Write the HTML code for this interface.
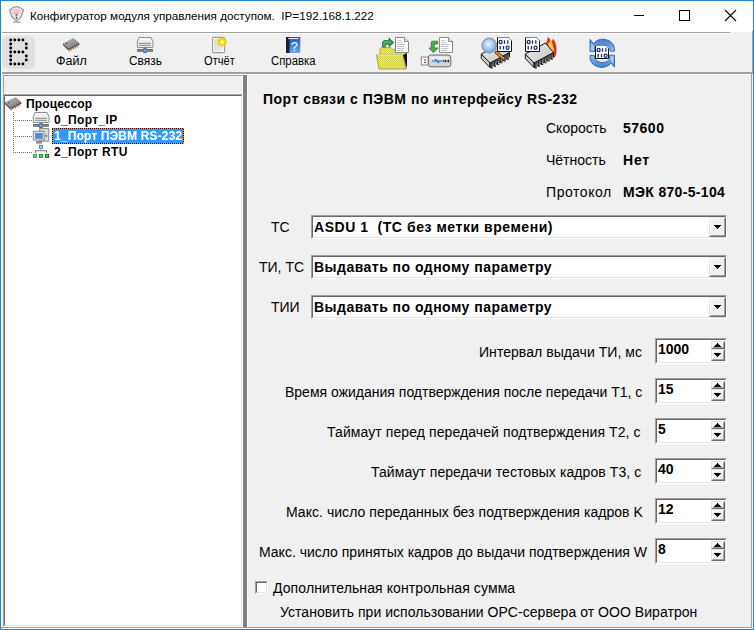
<!DOCTYPE html>
<html><head><meta charset="utf-8">
<style>
*{margin:0;padding:0;box-sizing:border-box}
html,body{width:754px;height:630px;overflow:hidden;background:#f0f0f0}
body{position:relative;font-family:"Liberation Sans",sans-serif;color:#000}
.a{position:absolute}
.t{position:absolute;white-space:pre;line-height:1}
.r{font-size:14px}
.b{font-weight:bold}
.sunk{position:absolute;border-top:1px solid #a0a0a0;border-left:1px solid #a0a0a0;border-right:1px solid #fff;border-bottom:1px solid #fff}
.sunk>.in{position:absolute;left:0;top:0;right:0;bottom:0;border-top:1px solid #696969;border-left:1px solid #696969;border-right:1px solid #e3e3e3;border-bottom:1px solid #e3e3e3;background:#fff}
.btn{position:absolute;background:#f0f0f0;border-top:1px solid #e3e3e3;border-left:1px solid #e3e3e3;border-right:1px solid #696969;border-bottom:1px solid #696969}
.btn>.in{position:absolute;left:0;top:0;right:0;bottom:0;border-top:1px solid #fff;border-left:1px solid #fff;border-right:1px solid #a0a0a0;border-bottom:1px solid #a0a0a0}
.dn{position:absolute;width:0;height:0;border-left:3.5px solid transparent;border-right:3.5px solid transparent;border-top:4px solid #000}
.up{position:absolute;width:0;height:0;border-left:3.5px solid transparent;border-right:3.5px solid transparent;border-bottom:4px solid #000}
</style></head><body>
<!-- window border -->
<div class="a" style="left:0;top:0;width:754px;height:630px;border:1px solid #1883d7"></div>
<!-- title bar -->
<div class="a" style="left:1px;top:1px;width:752px;height:31px;background:#fff"></div>

<div class="t" style="left:30px;top:10px;font-size:11.7px">Конфигуратор модуля управления доступом.  IP=192.168.1.222</div>
<div class="a" style="left:634px;top:15px;width:10px;height:1px;background:#000"></div>
<div class="a" style="left:679px;top:10px;width:11px;height:11px;border:1px solid #000"></div>
<svg class="a" style="left:724px;top:9px" width="13" height="13" viewBox="0 0 13 13"><path d="M1 1L12 12M12 1L1 12" stroke="#000" stroke-width="1.1" fill="none"/></svg>

<!-- toolbar frame -->
<div class="a" style="left:2px;top:32px;width:728px;height:1px;background:#a0a0a0"></div>
<div class="a" style="left:2px;top:33px;width:728px;height:1px;background:#fff"></div>
<div class="a" style="left:752px;top:31px;width:1px;height:43px;background:#a0a0a0"></div>
<div class="a" style="left:1px;top:72px;width:752px;height:2px;background:#a0a0a0"></div>
<div class="a" style="left:1px;top:74px;width:751px;height:1px;background:#fff"></div>
<div class="a" style="left:1px;top:32px;width:1px;height:597px;background:#fff"></div>
<div class="a" style="left:751px;top:74px;width:1px;height:554px;background:#a0a0a0"></div>
<div class="a" style="left:752px;top:74px;width:1px;height:555px;background:#fff"></div>
<div class="a" style="left:1px;top:627px;width:751px;height:1px;background:#a0a0a0"></div>
<div class="a" style="left:1px;top:628px;width:752px;height:1px;background:#fff"></div>

<!-- B button -->
<div class="a" style="left:2px;top:36px;width:33px;height:33px;background:#e1e1e1;border-radius:6px"></div>


<!-- toolbar labels -->
<div class="t" style="left:56px;top:55px;font-size:12.5px;transform:scaleX(1);transform-origin:0 0">Файл</div>
<div class="t" style="left:129px;top:55px;font-size:12.5px;transform:scaleX(.95);transform-origin:0 0">Связь</div>
<div class="t" style="left:204px;top:55px;font-size:12.5px;transform:scaleX(.89);transform-origin:0 0">Отчёт</div>
<div class="t" style="left:271px;top:55px;font-size:12.5px;transform:scaleX(.91);transform-origin:0 0">Справка</div>

<!-- tree header panel -->
<div class="a" style="left:3px;top:75px;width:240px;height:19px;border-top:1px solid #a0a0a0;border-left:1px solid #a0a0a0;border-right:1px solid #fff;border-bottom:1px solid #fff"></div>
<!-- tree box -->
<div class="sunk" style="left:3px;top:94px;width:240px;height:533px"><div class="in"></div></div>
<!-- splitter -->
<div class="a" style="left:243px;top:75px;width:4px;height:552px;background:#808080"></div>
<div class="a" style="left:247px;top:75px;width:1px;height:552px;background:#f8f8f8"></div>

<!-- tree content -->
<div class="t b" style="left:26px;top:98px;font-size:12px;letter-spacing:.12px">Процессор</div>
<div class="t b" style="left:54px;top:114px;font-size:12px;letter-spacing:.37px">0_Порт_IP</div>
<svg class="a" style="left:52px;top:128px" width="132" height="16" shape-rendering="crispEdges"><rect width="132" height="16" fill="#3399ff"/><rect x=".5" y=".5" width="131" height="15" fill="none" stroke="#000"/><rect x=".5" y=".5" width="131" height="15" fill="none" stroke="#ff9010" stroke-dasharray="1 1"/></svg>
<div class="t b" style="left:54px;top:130px;font-size:12px;color:#fff;letter-spacing:.14px">1_Порт ПЭВМ RS-232</div>
<div class="t b" style="left:54px;top:146px;font-size:12px;letter-spacing:.33px">2_Порт RTU</div>

<!-- icons -->
<svg class="a" style="left:0;top:0" width="754" height="630" viewBox="0 0 754 630">
<defs>
<linearGradient id="gChip" x1="0" y1="0" x2="1" y2="1"><stop offset="0" stop-color="#c4c4c4"/><stop offset="1" stop-color="#6e6e6e"/></linearGradient>
<linearGradient id="gBook" x1="0" y1="0" x2="0" y2="1"><stop offset="0" stop-color="#1c58b8"/><stop offset="1" stop-color="#6aa8f2"/></linearGradient>
<linearGradient id="gPage" x1="0" y1="0" x2="1" y2="1"><stop offset="0" stop-color="#cdd3cd"/><stop offset="1" stop-color="#f2f2f0"/></linearGradient>
<radialGradient id="gLens" cx=".45" cy=".4" r=".6"><stop offset="0" stop-color="#e8f4ff"/><stop offset=".6" stop-color="#9cc8f8"/><stop offset="1" stop-color="#6aa2e8"/></radialGradient>
<linearGradient id="gBigChip" x1="0" y1="0" x2="1" y2="1"><stop offset="0" stop-color="#ececec"/><stop offset="1" stop-color="#c4c4c4"/></linearGradient>
<linearGradient id="gArrow" x1="0" y1="0" x2="0" y2="1"><stop offset="0" stop-color="#3f7cc8"/><stop offset=".5" stop-color="#6a9ede"/><stop offset="1" stop-color="#9cc2ee"/></linearGradient>
<pattern id="pDither" width="2" height="2" patternUnits="userSpaceOnUse"><rect width="2" height="2" fill="#f0f040"/><rect width="1" height="1" fill="#c8c860"/><rect x="1" y="1" width="1" height="1" fill="#d8d850"/></pattern>
</defs>
<g fill="#000"><circle cx="10.7" cy="40" r="1.45"/><circle cx="14.8" cy="40" r="1.45"/><circle cx="18.9" cy="40" r="1.45"/><circle cx="22.9" cy="40" r="1.45"/><circle cx="10.7" cy="52" r="1.45"/><circle cx="14.8" cy="52" r="1.45"/><circle cx="18.9" cy="52" r="1.45"/><circle cx="22.9" cy="52" r="1.45"/><circle cx="10.7" cy="64" r="1.45"/><circle cx="14.8" cy="64" r="1.45"/><circle cx="18.9" cy="64" r="1.45"/><circle cx="22.9" cy="64" r="1.45"/><circle cx="10.7" cy="44" r="1.45"/><circle cx="26.3" cy="44" r="1.45"/><circle cx="10.7" cy="48" r="1.45"/><circle cx="26.3" cy="48" r="1.45"/><circle cx="10.7" cy="56" r="1.45"/><circle cx="26.3" cy="56" r="1.45"/><circle cx="10.7" cy="60" r="1.45"/><circle cx="26.3" cy="60" r="1.45"/></g>
<g transform="translate(60,35)"><path d="M3,8.3 L13.5,3 L19.3,8 L8.3,13.6 Z" fill="url(#gChip)"/><path d="M3,8.3 L8.3,13.6 L8.3,15.4 L3,10 Z" fill="#4a4a4a"/><path d="M8.3,13.6 L19.3,8 L19.3,9.8 L8.3,15.4 Z" fill="#3a3a3a"/><path d="M5.5,8.6 L7,7.8 L8,8.8 L6.5,9.6Z" fill="#505050"/><path d="M9.4,13.600000000000001 L9.4,16.6" stroke="#b87848" stroke-width="1.1"/><path d="M11.4,12.6 L11.4,15.6" stroke="#b87848" stroke-width="1.1"/><path d="M13.4,11.5 L13.4,14.5" stroke="#b87848" stroke-width="1.1"/><path d="M15.4,10.4 L15.4,13.4" stroke="#b87848" stroke-width="1.1"/><path d="M17.4,9.4 L17.4,12.4" stroke="#b87848" stroke-width="1.1"/></g>
<g transform="translate(2,94)"><path d="M3,8.3 L13.5,3 L19.3,8 L8.3,13.6 Z" fill="url(#gChip)"/><path d="M3,8.3 L8.3,13.6 L8.3,15.4 L3,10 Z" fill="#4a4a4a"/><path d="M8.3,13.6 L19.3,8 L19.3,9.8 L8.3,15.4 Z" fill="#3a3a3a"/><path d="M5.5,8.6 L7,7.8 L8,8.8 L6.5,9.6Z" fill="#505050"/><path d="M9.4,13.600000000000001 L9.4,16.6" stroke="#b87848" stroke-width="1.1"/><path d="M11.4,12.6 L11.4,15.6" stroke="#b87848" stroke-width="1.1"/><path d="M13.4,11.5 L13.4,14.5" stroke="#b87848" stroke-width="1.1"/><path d="M15.4,10.4 L15.4,13.4" stroke="#b87848" stroke-width="1.1"/><path d="M17.4,9.4 L17.4,12.4" stroke="#b87848" stroke-width="1.1"/></g>
<g transform="translate(134,34)"><path d="M5,3.5 H17 L19,7.5 V13 Q19,13.5 18.5,13.5 H3.8 Q3.3,13.5 3.3,13 V7.5 Z" fill="#ececec" stroke="#8c8c8c" stroke-width="1"/><path d="M5.5,5 H16.5" stroke="#fff" stroke-width="1"/><rect x="5" y="8.8" width="12" height="1.2" fill="#9a9a9a"/><rect x="5" y="10.8" width="12" height="1.2" fill="#9a9a9a"/><rect x="9.3" y="13.5" width="3.5" height="1.6" fill="#787878"/><rect x="3.1" y="15" width="15.8" height="2.8" fill="#6a6a6a"/><rect x="4" y="16" width="14" height=".8" fill="#8a8a8a"/><path d="M9.2,19 Q9.2,15.6 11,15.6 Q12.8,15.6 12.8,19 Z" fill="#2f6fe0"/><rect x="10" y="15.8" width="2" height="1.6" fill="#8ab8ff"/></g>
<g transform="translate(30,109)"><path d="M5,3.5 H17 L19,7.5 V13 Q19,13.5 18.5,13.5 H3.8 Q3.3,13.5 3.3,13 V7.5 Z" fill="#ececec" stroke="#8c8c8c" stroke-width="1"/><path d="M5.5,5 H16.5" stroke="#fff" stroke-width="1"/><rect x="5" y="8.8" width="12" height="1.2" fill="#9a9a9a"/><rect x="5" y="10.8" width="12" height="1.2" fill="#9a9a9a"/><rect x="9.3" y="13.5" width="3.5" height="1.6" fill="#787878"/><rect x="3.1" y="15" width="15.8" height="2.8" fill="#6a6a6a"/><rect x="4" y="16" width="14" height=".8" fill="#8a8a8a"/><path d="M9.2,19 Q9.2,15.6 11,15.6 Q12.8,15.6 12.8,19 Z" fill="#2f6fe0"/><rect x="10" y="15.8" width="2" height="1.6" fill="#8ab8ff"/></g>
<rect x="212.6" y="37.4" width="12" height="15.2" rx="1" fill="url(#gPage)" stroke="#999a96" stroke-width="1.1"/>
<rect x="213.8" y="38.6" width="9.6" height="12.8" fill="none" stroke="#fff" stroke-width=".9"/>
<circle cx="222.2" cy="42" r="4.6" fill="#f0d000"/>
<path d="M222.2,39.2 L223,41 L224.8,41.1 L223.5,42.4 L223.9,44.3 L222.2,43.4 L220.5,44.3 L220.9,42.4 L219.6,41.1 L221.4,41Z" fill="#fffbe0"/>
<rect x="286" y="37" width="14.3" height="16" rx=".8" fill="url(#gBook)"/>
<rect x="286" y="37" width="3.6" height="16" fill="#16202e"/>
<rect x="288" y="38.1" width="10.5" height="1" fill="#e6f0ff"/>
<text x="294.4" y="50.5" font-family="Liberation Sans" font-size="12" fill="#fff" text-anchor="middle">?</text>
<g>
<rect x="39.7" y="128.6" width="9" height="12.6" fill="#dcdcdc" stroke="#8a8a8a" stroke-width="1"/>
<rect x="45.3" y="134.8" width="1.8" height="2" fill="#2ca02c"/>
<rect x="33.3" y="131.3" width="10.8" height="8.8" fill="#e6e6e6" stroke="#8a8a8a" stroke-width="1"/>
<rect x="35" y="133" width="7.8" height="5.8" fill="#5a8ad2"/>
<rect x="36" y="141" width="6" height="2.6" fill="#8a8a8a"/>
</g>
<rect x="38.9" y="144.9" width="4" height="4" fill="#4a8ae0"/><rect x="40" y="146" width="1.8" height="1.8" fill="#d8e0f0"/>
<path d="M35.5,153 V150.8 H46.5 V153 M41,149.6 V150.8" stroke="#777" stroke-width="1.1" fill="none"/>
<rect x="33" y="154" width="4" height="4" fill="#4cb04c"/><rect x="34" y="155" width="2" height="2" fill="#9ad09a" opacity=".7"/>
<rect x="39" y="154" width="4" height="4" fill="#2e9a34"/><rect x="40" y="155" width="2" height="2" fill="#9ad09a" opacity=".7"/>
<rect x="45" y="154" width="4" height="4" fill="#127a1a"/><rect x="46" y="155" width="2" height="2" fill="#9ad09a" opacity=".7"/>
<g fill="#6a6a6a"><rect x="13" y="112" width="1" height="1"/><rect x="13" y="114" width="1" height="1"/><rect x="13" y="116" width="1" height="1"/><rect x="13" y="118" width="1" height="1"/><rect x="13" y="120" width="1" height="1"/><rect x="13" y="122" width="1" height="1"/><rect x="13" y="124" width="1" height="1"/><rect x="13" y="126" width="1" height="1"/><rect x="13" y="128" width="1" height="1"/><rect x="13" y="130" width="1" height="1"/><rect x="13" y="132" width="1" height="1"/><rect x="13" y="134" width="1" height="1"/><rect x="13" y="136" width="1" height="1"/><rect x="13" y="138" width="1" height="1"/><rect x="13" y="140" width="1" height="1"/><rect x="13" y="142" width="1" height="1"/><rect x="13" y="144" width="1" height="1"/><rect x="13" y="146" width="1" height="1"/><rect x="13" y="148" width="1" height="1"/><rect x="13" y="150" width="1" height="1"/><rect x="13" y="152" width="1" height="1"/><rect x="15" y="120" width="1" height="1"/><rect x="17" y="120" width="1" height="1"/><rect x="19" y="120" width="1" height="1"/><rect x="21" y="120" width="1" height="1"/><rect x="23" y="120" width="1" height="1"/><rect x="25" y="120" width="1" height="1"/><rect x="27" y="120" width="1" height="1"/><rect x="29" y="120" width="1" height="1"/><rect x="31" y="120" width="1" height="1"/><rect x="15" y="136" width="1" height="1"/><rect x="17" y="136" width="1" height="1"/><rect x="19" y="136" width="1" height="1"/><rect x="21" y="136" width="1" height="1"/><rect x="23" y="136" width="1" height="1"/><rect x="25" y="136" width="1" height="1"/><rect x="27" y="136" width="1" height="1"/><rect x="29" y="136" width="1" height="1"/><rect x="31" y="136" width="1" height="1"/><rect x="15" y="152" width="1" height="1"/><rect x="17" y="152" width="1" height="1"/><rect x="19" y="152" width="1" height="1"/><rect x="21" y="152" width="1" height="1"/><rect x="23" y="152" width="1" height="1"/><rect x="25" y="152" width="1" height="1"/><rect x="27" y="152" width="1" height="1"/><rect x="29" y="152" width="1" height="1"/><rect x="31" y="152" width="1" height="1"/></g>
<g transform="translate(372,34)">
<path d="M12.5,13 Q12.5,11 15,11 L19,11 Q22,11 22,13 L20,14 H12.5Z" fill="#fff"/>
<path d="M8,18 Q7.5,13.5 10,13.5 H19 L21,15.5 H33.5 V34.5 H7.5Z" fill="url(#pDither)" stroke="#9a9a70" stroke-width=".8"/>
</g>
<g transform="translate(395,37)"><path d="M.5,.5 H9.5 L13.5,4.5 V15.5 H.5 Z" fill="#fff" stroke="#8a8a80" stroke-width="1"/><path d="M9.5,.5 V4.5 H13.5" fill="#e8e8e8" stroke="#8a8a80" stroke-width="1"/><rect x="2.2" y="3" width="4" height=".8" fill="#b8b8b0"/><rect x="2.2" y="5" width="5" height=".8" fill="#b8b8b0"/><rect x="2.2" y="7" width="8" height=".8" fill="#b0b0a8"/><rect x="2.2" y="9" width="7" height=".8" fill="#a8a8c8"/><rect x="2.2" y="11" width="7" height=".8" fill="#b8c0a0"/><rect x="2.2" y="13" width="6" height=".8" fill="#a8b0c8"/></g>
<g transform="translate(372,34)">
<path d="M4.5,21 H31 L34,35 H7 Z" fill="url(#pDither)" stroke="#8a8a60" stroke-width=".8"/>
<path d="M31,21 L35,34.5 V19 Z" fill="#111"/>
<path d="M5,21.2 H30.5" stroke="#fff" stroke-width="1" opacity=".8"/>
<path d="M10.5,13 V9 Q10.5,6.5 13,6.5 H17 V4 L21.7,8.5 L17,13 V10.3 H14 Q13.5,10.3 13.5,10.8 V13Z" fill="#3c9a4a" stroke="#1f6a2a" stroke-width=".8"/><path d="M12,12.5 V9.3 Q12,8 13.3,8 H18" fill="none" stroke="#8fd29a" stroke-width=".7"/>
</g>
<g transform="translate(439,37)"><path d="M.5,.5 H9.5 L13.5,4.5 V15.5 H.5 Z" fill="#fff" stroke="#8a8a80" stroke-width="1"/><path d="M9.5,.5 V4.5 H13.5" fill="#e8e8e8" stroke="#8a8a80" stroke-width="1"/><rect x="2.2" y="3" width="4" height=".8" fill="#b8b8b0"/><rect x="2.2" y="5" width="5" height=".8" fill="#b8b8b0"/><rect x="2.2" y="7" width="8" height=".8" fill="#b0b0a8"/><rect x="2.2" y="9" width="7" height=".8" fill="#a8a8c8"/><rect x="2.2" y="11" width="7" height=".8" fill="#b8c0a0"/><rect x="2.2" y="13" width="6" height=".8" fill="#a8b0c8"/></g>
<g transform="translate(416,34)">
<path d="M21.7,7.2 H16.6 Q15.2,7.2 15.2,8.6 V14 H13 L17.5,18.7 L22,14 H18.2 V10 H21.7Z" fill="#4cae4c" stroke="#2a7a2a" stroke-width=".8"/>
<rect x="5.3" y="23" width="7" height="8" fill="#f4f4f4" stroke="#8a8a8a" stroke-width="1"/>
<rect x="8" y="25.6" width="2" height="1" fill="#555"/><rect x="8" y="28" width="2" height="1" fill="#555"/>
<rect x="12.3" y="21" width="22.5" height="11.8" rx="2.5" fill="#d4d4d4" stroke="#6a6a6a" stroke-width="1"/>
<rect x="14" y="22.5" width="19" height="3" rx="1" fill="#eeeeee"/>
<path d="M16,27 H26.5 M19,25 L21,27 L23,29" stroke="#2a6ad8" stroke-width="1.2" fill="none"/>
<circle cx="27.5" cy="27" r="1" fill="#2a6ad8"/><ellipse cx="29.5" cy="27" rx=".8" ry="1.2" fill="#111"/><ellipse cx="32.3" cy="27" rx=".8" ry="1.2" fill="#111"/>
</g>
<g transform="translate(476,34)"><path d="M5.3,20 L14,29 L14,33.5 L5.3,24.5 Z" fill="#cfcfcf" stroke="#111" stroke-width="1"/><path d="M14,29 L33.5,18.5 L33.5,23 L14,33.5 Z" fill="#6a6a6a" stroke="#111" stroke-width="1"/><path d="M5.3,20 L25.5,9 L33.5,18.5 L14,29 Z" fill="url(#gBigChip)" stroke="#111" stroke-width="1"/><path d="M15.80,29.50 V34.50" stroke="#111" stroke-width="2"/><path d="M16.10,30.10 V33.70" stroke="#e8e8e8" stroke-width=".7"/><path d="M19.00,27.75 V32.75" stroke="#111" stroke-width="2"/><path d="M19.30,28.35 V31.95" stroke="#e8e8e8" stroke-width=".7"/><path d="M22.20,26.00 V31.00" stroke="#111" stroke-width="2"/><path d="M22.50,26.60 V30.20" stroke="#e8e8e8" stroke-width=".7"/><path d="M25.40,24.25 V29.25" stroke="#111" stroke-width="2"/><path d="M25.70,24.85 V28.45" stroke="#e8e8e8" stroke-width=".7"/><path d="M28.60,22.50 V27.50" stroke="#111" stroke-width="2"/><path d="M28.90,23.10 V26.70" stroke="#e8e8e8" stroke-width=".7"/><path d="M31.80,20.75 V25.75" stroke="#111" stroke-width="2"/><path d="M32.10,21.35 V24.95" stroke="#e8e8e8" stroke-width=".7"/></g>
<g transform="translate(497,37)"><path d="M.5,.5 H11.5 L14.5,3.5 V14.5 H.5Z" fill="#fff" stroke="#111" stroke-width="1"/><path d="M.5,.5 H11.5 L14.5,3.5" fill="none" stroke="#888" stroke-width="1"/><g fill="none" stroke="#1c2a84" stroke-width="1.3"><ellipse cx="3.6" cy="5" rx="1.5" ry="1.6"/><path d="M7.5,3.3 V6.7 M10.8,3.3 V6.7"/><path d="M3.2,9 V12.4 M6.5,9 V12.4"/><ellipse cx="10.6" cy="10.7" rx="1.5" ry="1.6"/></g></g>
<g transform="translate(476,34)">
<path d="M20.5,18.5 L27.5,24.5" stroke="#222" stroke-width="3.4" stroke-linecap="round"/>
<path d="M20.5,18.5 L27.5,24.5" stroke="#f08a10" stroke-width="2.2" stroke-linecap="round"/>
<circle cx="13.3" cy="11.5" r="7.2" fill="url(#gLens)" stroke="#9a9a9a" stroke-width="1.4"/>
</g>
<g transform="translate(520,34)">
<path d="M26,9 Q28,6 27.5,3 Q31,5 31,8 Q33,6 33,4.5 Q36.5,9 36.5,15 Q37,20 34.5,24 L31,21 Z" fill="#e03020"/>
<path d="M28,10 Q30,8 30,6 Q33,9 33,12 Q34.5,16 33.5,21 L30,18Z" fill="#ffd040"/>
</g>
<g transform="translate(520,34)"><path d="M5.3,20 L14,29 L14,33.5 L5.3,24.5 Z" fill="#cfcfcf" stroke="#111" stroke-width="1"/><path d="M14,29 L33.5,18.5 L33.5,23 L14,33.5 Z" fill="#6a6a6a" stroke="#111" stroke-width="1"/><path d="M5.3,20 L25.5,9 L33.5,18.5 L14,29 Z" fill="url(#gBigChip)" stroke="#111" stroke-width="1"/><path d="M15.80,29.50 V34.50" stroke="#111" stroke-width="2"/><path d="M16.10,30.10 V33.70" stroke="#e8e8e8" stroke-width=".7"/><path d="M19.00,27.75 V32.75" stroke="#111" stroke-width="2"/><path d="M19.30,28.35 V31.95" stroke="#e8e8e8" stroke-width=".7"/><path d="M22.20,26.00 V31.00" stroke="#111" stroke-width="2"/><path d="M22.50,26.60 V30.20" stroke="#e8e8e8" stroke-width=".7"/><path d="M25.40,24.25 V29.25" stroke="#111" stroke-width="2"/><path d="M25.70,24.85 V28.45" stroke="#e8e8e8" stroke-width=".7"/><path d="M28.60,22.50 V27.50" stroke="#111" stroke-width="2"/><path d="M28.90,23.10 V26.70" stroke="#e8e8e8" stroke-width=".7"/><path d="M31.80,20.75 V25.75" stroke="#111" stroke-width="2"/><path d="M32.10,21.35 V24.95" stroke="#e8e8e8" stroke-width=".7"/></g>
<g transform="translate(525,37)"><path d="M.5,.5 H11.5 L14.5,3.5 V14.5 H.5Z" fill="#fff" stroke="#111" stroke-width="1"/><path d="M.5,.5 H11.5 L14.5,3.5" fill="none" stroke="#888" stroke-width="1"/><g fill="none" stroke="#1c2a84" stroke-width="1.3"><ellipse cx="3.6" cy="5" rx="1.5" ry="1.6"/><path d="M7.5,3.3 V6.7 M10.8,3.3 V6.7"/><path d="M3.2,9 V12.4 M6.5,9 V12.4"/><ellipse cx="10.6" cy="10.7" rx="1.5" ry="1.6"/></g></g>
<g transform="translate(586,36)">
<path id="arT" d="M4,3.5 L7.5,7.5 Q11,3.2 17,3.2 Q24,3.5 27.5,9 Q28.8,12 28.5,15.2 L24.3,15.2 Q24.2,11.5 21.5,9.5 Q18,7.4 13.5,8.3 Q10.5,9.2 8.9,11 L8.9,15.4 L4,15.4 Z" fill="url(#gArrow)" stroke="#2c62ae" stroke-width=".9"/>
<path d="M5.2,6.5 L5.2,14.2 L8,14.2 L8,10.5Z" fill="#a8ccf2"/>
<use href="#arT" transform="rotate(180 16.25 17.3)"/>
<path d="M5.2,6.5 L5.2,14.2 L8,14.2 L8,10.5Z" fill="#a8ccf2" transform="rotate(180 16.25 17.3)"/>
</g>
<g transform="translate(595,45)"><path d="M.5,.5 H10.5 L13.5,3.5 V13.5 H.5Z" fill="#fff" stroke="#111" stroke-width="1"/><path d="M.5,.5 H10.5 L13.5,3.5" fill="none" stroke="#888" stroke-width="1"/><g fill="none" stroke="#1c2a84" stroke-width="1.3"><ellipse cx="3.6" cy="5" rx="1.5" ry="1.6"/><path d="M7.5,3.3 V6.7 M10.8,3.3 V6.7"/><path d="M3.2,9 V12.4 M6.5,9 V12.4"/><ellipse cx="10.6" cy="10.7" rx="1.5" ry="1.6"/></g></g>
<g transform="translate(6,4)">
<path d="M3.6,6 Q8,2.5 10.5,2.8 Q13,2.5 17.5,6 L15.5,12 Q13.5,15.5 10.5,17 Q7.5,15.5 5.5,12 Z" fill="#e8e8e8" stroke="#8a8a8a" stroke-width="1.1"/>
<path d="M6,7.5 Q10.5,3.8 15,7.5" fill="none" stroke="#f49090" stroke-width=".8"/>
<path d="M7.5,9.2 Q10.5,6.5 13.5,9.2" fill="none" stroke="#f07070" stroke-width=".8"/>
<rect x="9.5" y="9.8" width="2" height="2" fill="#e83838"/>
<rect x="9.8" y="12.5" width="1.4" height="2.5" fill="#666"/>
<rect x="7" y="17.6" width="7.6" height="1" fill="#8a8a8a"/>
</g>
</svg>
<!-- right panel -->
<div class="t b" style="left:263px;top:92px;font-size:14px;letter-spacing:.5px">Порт связи с ПЭВМ по интерфейсу RS-232</div>
<div class="t r" style="left:546px;top:121px">Скорость</div>
<div class="t r b" style="left:623px;top:121px;letter-spacing:.5px">57600</div>
<div class="t r" style="left:546px;top:153px">Чётность</div>
<div class="t r b" style="left:623px;top:153px;letter-spacing:.8px">Нет</div>
<div class="t r" style="left:546px;top:185px;letter-spacing:.57px">Протокол</div>
<div class="t r b" style="left:623px;top:185px;letter-spacing:.33px">МЭК 870-5-104</div>

<div class="t r" style="left:271px;top:220px">ТС</div>
<div class="t r" style="left:259px;top:260px">ТИ, ТС</div>
<div class="t r" style="left:271px;top:300px">ТИИ</div>

<!-- combos -->
<div class="sunk" style="left:311px;top:215px;width:416px;height:24px"><div class="in"></div></div>
<div class="btn" style="left:709px;top:217px;width:17px;height:20px"><div class="in"></div></div>
<svg class="a" style="left:714px;top:225px" width="7" height="4" shape-rendering="crispEdges"><path d="M0 0h7v1h-1v1h-1v1h-1v1h-1v-1h-1v-1h-1v-1h-1z" fill="#000"/></svg>
<div class="t r b" style="left:314px;top:220px;letter-spacing:.55px">ASDU 1  (ТС без метки времени)</div>

<div class="sunk" style="left:311px;top:255px;width:416px;height:24px"><div class="in"></div></div>
<div class="btn" style="left:709px;top:257px;width:17px;height:20px"><div class="in"></div></div>
<svg class="a" style="left:714px;top:265px" width="7" height="4" shape-rendering="crispEdges"><path d="M0 0h7v1h-1v1h-1v1h-1v1h-1v-1h-1v-1h-1v-1h-1z" fill="#000"/></svg>
<div class="t r b" style="left:314px;top:260px;letter-spacing:.48px">Выдавать по одному параметру</div>

<div class="sunk" style="left:311px;top:295px;width:416px;height:24px"><div class="in"></div></div>
<div class="btn" style="left:709px;top:297px;width:17px;height:20px"><div class="in"></div></div>
<svg class="a" style="left:714px;top:305px" width="7" height="4" shape-rendering="crispEdges"><path d="M0 0h7v1h-1v1h-1v1h-1v1h-1v-1h-1v-1h-1v-1h-1z" fill="#000"/></svg>
<div class="t r b" style="left:314px;top:300px;letter-spacing:.48px">Выдавать по одному параметру</div>

<!-- spin labels -->
<div class="t r" style="left:479px;top:345px;letter-spacing:.05px">Интервал выдачи ТИ, мс</div>
<div class="t r" style="left:285px;top:385px">Время ожидания подтверждения после передачи Т1, с</div>
<div class="t r" style="left:327px;top:425px;letter-spacing:.09px">Таймаут перед передачей подтверждения Т2, с</div>
<div class="t r" style="left:371px;top:465px;letter-spacing:.08px">Таймаут передачи тестовых кадров Т3, с</div>
<div class="t r" style="left:286px;top:505px;letter-spacing:.04px">Макс. число переданных без подтверждения кадров K</div>
<div class="t r" style="left:259px;top:545px">Макс. число принятых кадров до выдачи подтверждения W</div>

<div class="sunk" style="left:655px;top:338px;width:72px;height:26px"><div class="in"></div></div>
<div class="btn" style="left:711px;top:341px;width:14px;height:8px"><div class="in"></div></div>
<div class="btn" style="left:711px;top:349px;width:14px;height:12px"><div class="in"></div></div>
<svg class="a" style="left:714px;top:343px" width="7" height="4" shape-rendering="crispEdges"><path d="M3 0h1v1h1v1h1v1h1v1h-7v-1h1v-1h1v-1h1z" fill="#000"/></svg>
<svg class="a" style="left:714px;top:353px" width="7" height="4" shape-rendering="crispEdges"><path d="M0 0h7v1h-1v1h-1v1h-1v1h-1v-1h-1v-1h-1v-1h-1z" fill="#000"/></svg>
<div class="t r b" style="left:658px;top:342px">1000</div>
<div class="sunk" style="left:655px;top:378px;width:72px;height:26px"><div class="in"></div></div>
<div class="btn" style="left:711px;top:381px;width:14px;height:8px"><div class="in"></div></div>
<div class="btn" style="left:711px;top:389px;width:14px;height:12px"><div class="in"></div></div>
<svg class="a" style="left:714px;top:383px" width="7" height="4" shape-rendering="crispEdges"><path d="M3 0h1v1h1v1h1v1h1v1h-7v-1h1v-1h1v-1h1z" fill="#000"/></svg>
<svg class="a" style="left:714px;top:393px" width="7" height="4" shape-rendering="crispEdges"><path d="M0 0h7v1h-1v1h-1v1h-1v1h-1v-1h-1v-1h-1v-1h-1z" fill="#000"/></svg>
<div class="t r b" style="left:658px;top:382px">15</div>
<div class="sunk" style="left:655px;top:418px;width:72px;height:26px"><div class="in"></div></div>
<div class="btn" style="left:711px;top:421px;width:14px;height:8px"><div class="in"></div></div>
<div class="btn" style="left:711px;top:429px;width:14px;height:12px"><div class="in"></div></div>
<svg class="a" style="left:714px;top:423px" width="7" height="4" shape-rendering="crispEdges"><path d="M3 0h1v1h1v1h1v1h1v1h-7v-1h1v-1h1v-1h1z" fill="#000"/></svg>
<svg class="a" style="left:714px;top:433px" width="7" height="4" shape-rendering="crispEdges"><path d="M0 0h7v1h-1v1h-1v1h-1v1h-1v-1h-1v-1h-1v-1h-1z" fill="#000"/></svg>
<div class="t r b" style="left:658px;top:422px">5</div>
<div class="sunk" style="left:655px;top:458px;width:72px;height:26px"><div class="in"></div></div>
<div class="btn" style="left:711px;top:461px;width:14px;height:8px"><div class="in"></div></div>
<div class="btn" style="left:711px;top:469px;width:14px;height:12px"><div class="in"></div></div>
<svg class="a" style="left:714px;top:463px" width="7" height="4" shape-rendering="crispEdges"><path d="M3 0h1v1h1v1h1v1h1v1h-7v-1h1v-1h1v-1h1z" fill="#000"/></svg>
<svg class="a" style="left:714px;top:473px" width="7" height="4" shape-rendering="crispEdges"><path d="M0 0h7v1h-1v1h-1v1h-1v1h-1v-1h-1v-1h-1v-1h-1z" fill="#000"/></svg>
<div class="t r b" style="left:658px;top:462px">40</div>
<div class="sunk" style="left:655px;top:498px;width:72px;height:26px"><div class="in"></div></div>
<div class="btn" style="left:711px;top:501px;width:14px;height:8px"><div class="in"></div></div>
<div class="btn" style="left:711px;top:509px;width:14px;height:12px"><div class="in"></div></div>
<svg class="a" style="left:714px;top:503px" width="7" height="4" shape-rendering="crispEdges"><path d="M3 0h1v1h1v1h1v1h1v1h-7v-1h1v-1h1v-1h1z" fill="#000"/></svg>
<svg class="a" style="left:714px;top:513px" width="7" height="4" shape-rendering="crispEdges"><path d="M0 0h7v1h-1v1h-1v1h-1v1h-1v-1h-1v-1h-1v-1h-1z" fill="#000"/></svg>
<div class="t r b" style="left:658px;top:502px">12</div>
<div class="sunk" style="left:655px;top:538px;width:72px;height:26px"><div class="in"></div></div>
<div class="btn" style="left:711px;top:541px;width:14px;height:8px"><div class="in"></div></div>
<div class="btn" style="left:711px;top:549px;width:14px;height:12px"><div class="in"></div></div>
<svg class="a" style="left:714px;top:543px" width="7" height="4" shape-rendering="crispEdges"><path d="M3 0h1v1h1v1h1v1h1v1h-7v-1h1v-1h1v-1h1z" fill="#000"/></svg>
<svg class="a" style="left:714px;top:553px" width="7" height="4" shape-rendering="crispEdges"><path d="M0 0h7v1h-1v1h-1v1h-1v1h-1v-1h-1v-1h-1v-1h-1z" fill="#000"/></svg>
<div class="t r b" style="left:658px;top:542px">8</div>

<!-- checkbox -->
<div class="sunk" style="left:255px;top:581px;width:13px;height:13px"><div class="in"></div></div>
<div class="t r" style="left:273px;top:581px;letter-spacing:.1px">Дополнительная контрольная сумма</div>
<div class="t r" style="left:280px;top:605px;letter-spacing:.05px">Установить при использовании ОРС-сервера от ООО Виратрон</div>
</body></html>
